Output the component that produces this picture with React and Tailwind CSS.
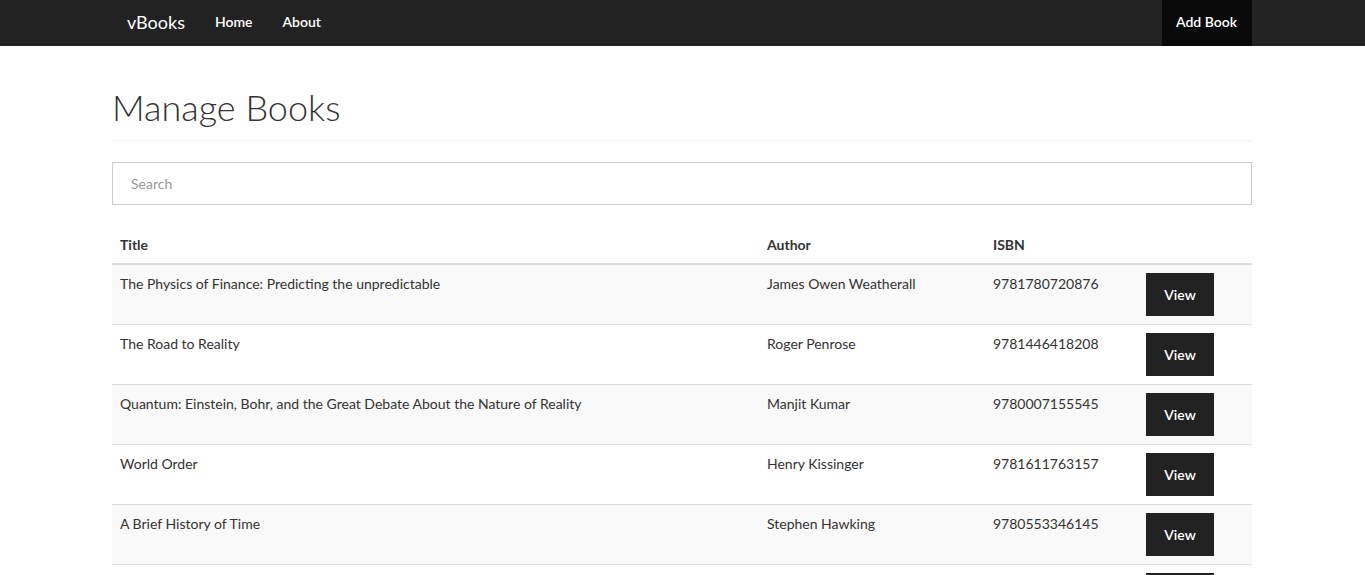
const books = [
  { title: "The Physics of Finance: Predicting the unpredictable", author: "James Owen Weatherall", isbn: "9781780720876" },
  { title: "The Road to Reality", author: "Roger Penrose", isbn: "9781446418208" },
  { title: "Quantum: Einstein, Bohr, and the Great Debate About the Nature of Reality", author: "Manjit Kumar", isbn: "9780007155545" },
  { title: "World Order", author: "Henry Kissinger", isbn: "9781611763157" },
  { title: "A Brief History of Time", author: "Stephen Hawking", isbn: "9780553346145" },
  { title: "Sapiens", author: "Yuval Noah Harari", isbn: "9780099590088" },
];

export default function App() {
  return (
    <div className="min-h-screen bg-white text-[#333] text-[14px] leading-[20px]" style={{ fontFamily: '"Source Sans Pro", Lato, "Noto Sans", sans-serif' }}>
      <nav className="h-[46px] bg-[#222]">
        <div className="ml-[112px] w-[1140px] flex h-full items-stretch">
          <a className="flex items-center pb-[2px] px-[15px] text-[18px] text-white">vBooks</a>
          <a className="flex items-center pb-[2px] px-[15px] text-white font-semibold">Home</a>
          <a className="flex items-center pb-[2px] px-[15px] text-white font-semibold">About</a>
          <div className="flex-1" />
          <a className="flex items-center pb-[2px] px-[14px] w-[90px] bg-[#090909] text-white font-semibold">Add Book</a>
        </div>
      </nav>
      <div className="ml-[112px] w-[1140px]">
        <h1 className="mt-[39px] pb-[11px] border-b border-[#eee] text-[36px] leading-[44px] font-light text-[#333]">Manage Books</h1>
        <div className="mt-[21px] h-[43px] border border-[#ccc] flex items-center px-[18px] text-[#999]">Search</div>
        <table className="mt-[20px] w-full border-collapse table-fixed">
          <colgroup>
            <col className="w-[647px]" />
            <col className="w-[226px]" />
            <col className="w-[153px]" />
            <col className="w-[114px]" />
          </colgroup>
          <thead>
            <tr className="border-b-2 border-[#ddd]">
              <th className="text-left font-bold p-[8px] pt-[10px]">Title</th>
              <th className="text-left font-bold p-[8px] pt-[10px]">Author</th>
              <th className="text-left font-bold p-[8px] pt-[10px]">ISBN</th>
              <th className="p-[8px]"></th>
            </tr>
          </thead>
          <tbody>
            {books.map((b, i) => (
              <tr key={i} className={(i % 2 === 0 ? "bg-[#f9f9f9]" : "bg-white") + " border-t border-[#ddd]"}>
                <td className="align-top px-[8px] pt-[9px] pb-[8px]">{b.title}</td>
                <td className="align-top px-[8px] pt-[9px] pb-[8px]">{b.author}</td>
                <td className="align-top px-[8px] pt-[9px] pb-[8px]">{b.isbn}</td>
                <td className="align-top p-[8px]">
                  <button className="w-[68px] h-[43px] bg-[#222] text-white font-semibold">View</button>
                </td>
              </tr>
            ))}
          </tbody>
        </table>
      </div>
    </div>
  );
}
